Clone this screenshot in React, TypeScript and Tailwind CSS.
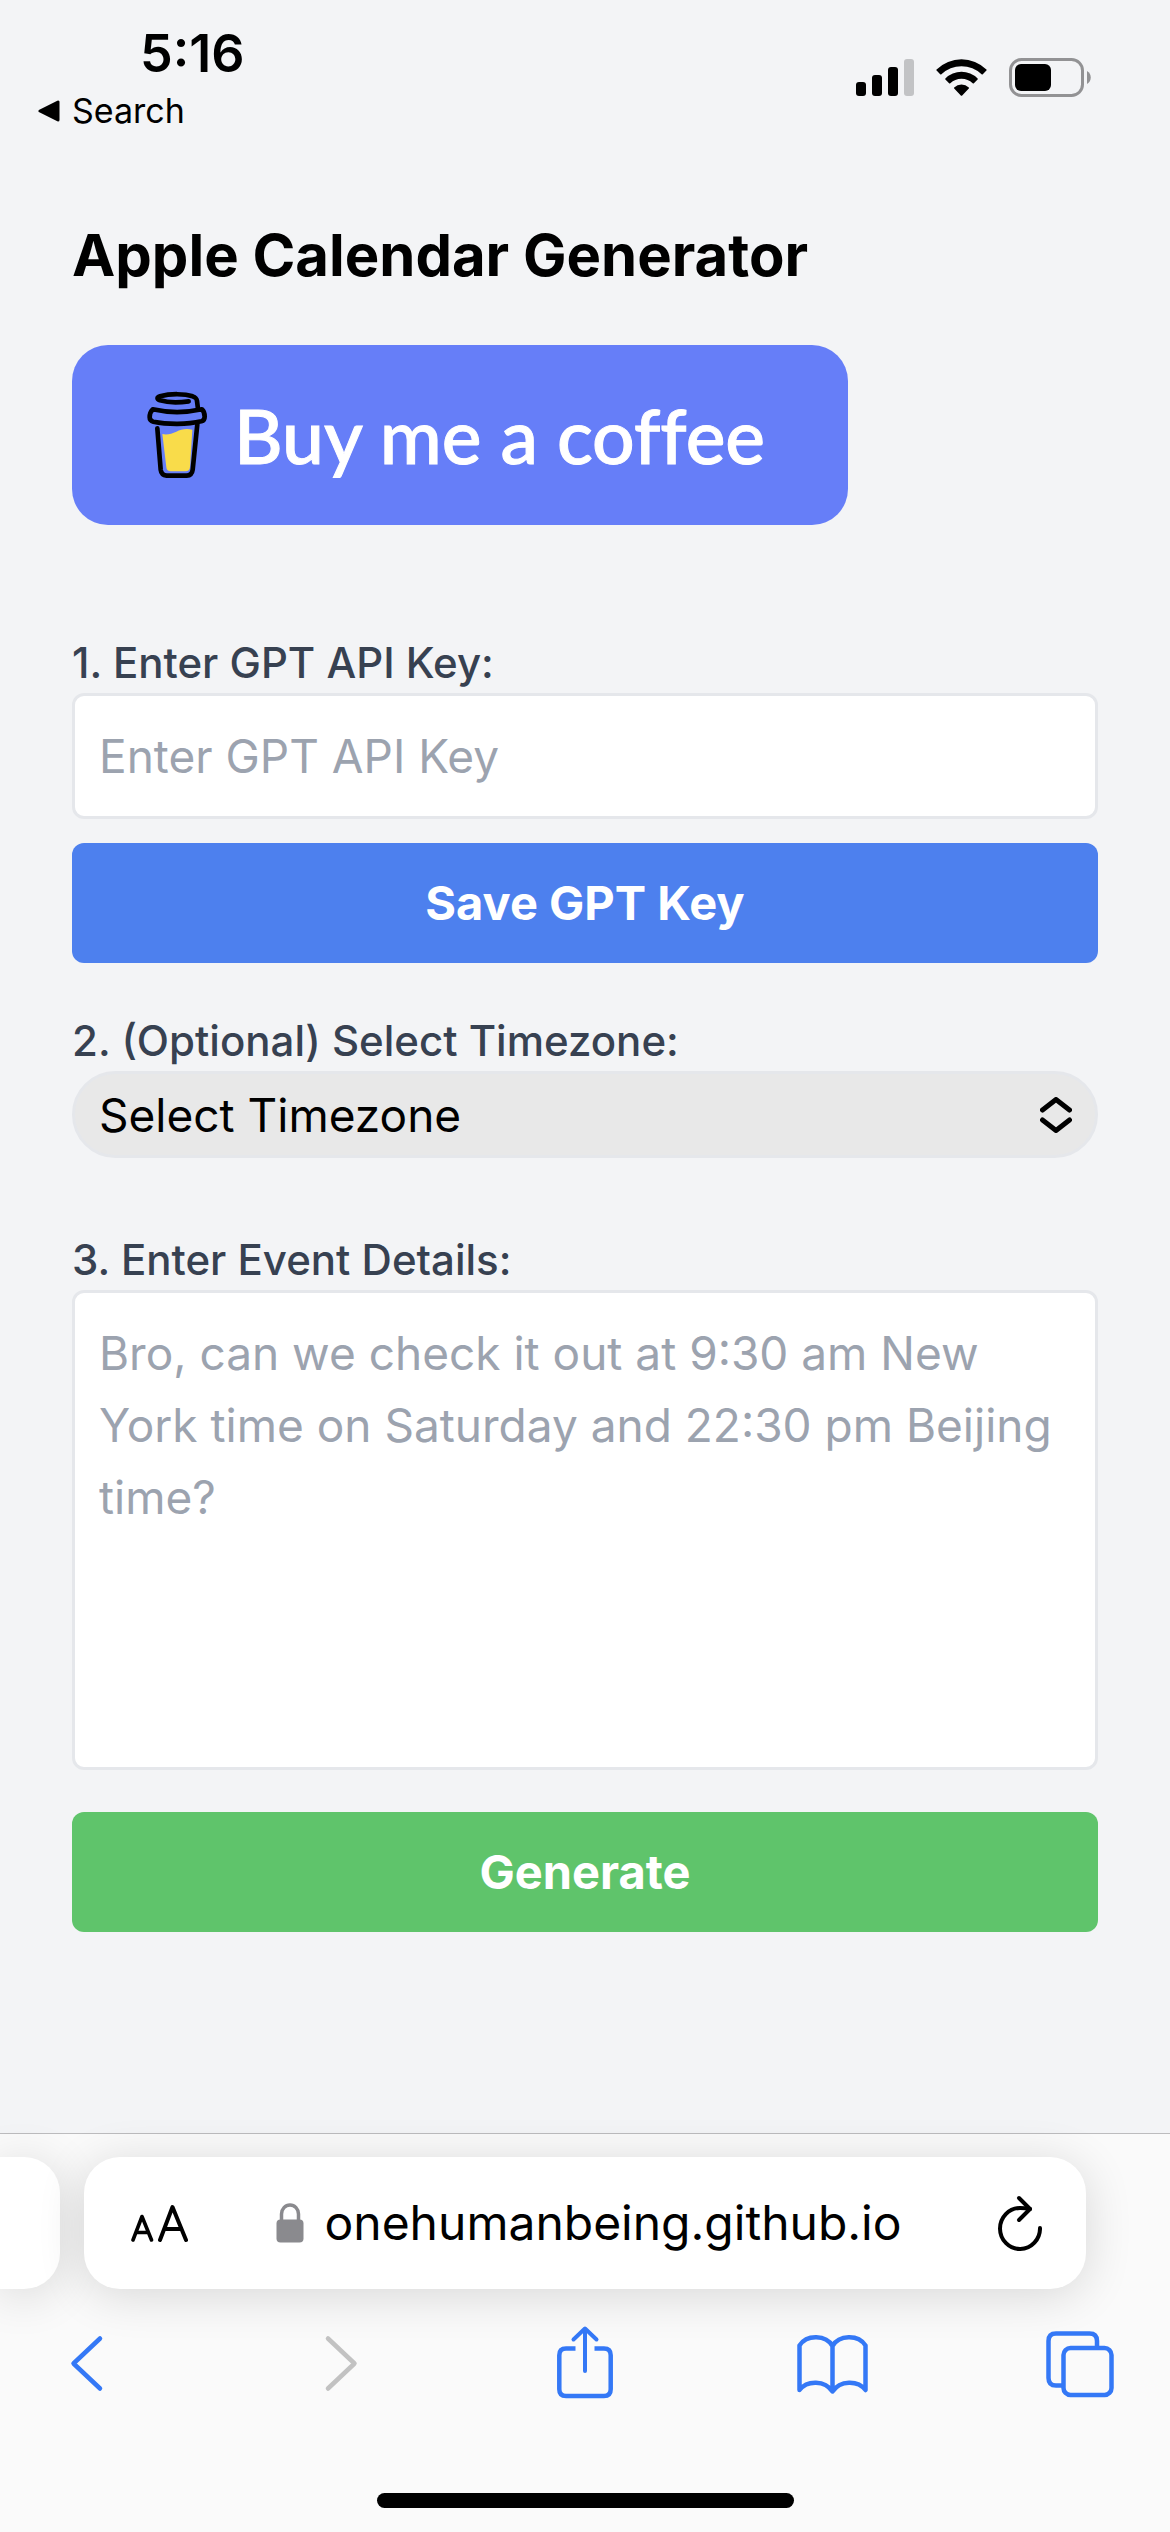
import { useState } from "react";
import type { FormEvent, ReactNode } from "react";

const TIMEZONES = ["America/New_York", "Europe/London", "Asia/Shanghai", "Asia/Tokyo"];

function StatusBar() {
  return (
    <header className="flex items-start justify-between pt-6 pb-3 pr-[79px] text-black">
      <div>
        <div className="pl-[140px] text-[52px] leading-[60px] font-semibold">5:16</div>
        <a href="#search" className="mt-[9px] flex items-center gap-3 pl-[38px] text-[34px] leading-9">
          <svg width="22" height="22" viewBox="0 0 22 22" aria-hidden="true">
            <path d="M20 2v18L2 11z" fill="#000" stroke="#000" strokeWidth="3" strokeLinejoin="round" />
          </svg>
          Search
        </a>
      </div>

      <div className="mt-[34px] flex items-center">
        <svg width="58" height="39" viewBox="0 0 58 39" aria-label="Signal">
          <rect x="0" y="24" width="10" height="14" rx="3" />
          <rect x="16" y="17" width="10" height="21" rx="3" />
          <rect x="32" y="9" width="10" height="29" rx="3" />
          <rect x="48" y="1" width="10" height="37" rx="3" fill="#c2c3c5" />
        </svg>
        <svg width="51" height="39" viewBox="0 0 51 39" className="ml-[22px]" aria-label="Wi-Fi">
          <path d="M0.6 11.4a35.6 35.6 0 0 1 49.8 0q.6.6 0 1.2l-3.6 3.7q-.6.6-1.2 0a28.8 28.8 0 0 0-40.2 0q-.6.6-1.2 0L.6 12.6q-.6-.6 0-1.2z" />
          <path d="M9.4 20.4a23 23 0 0 1 32.2 0q.6.6 0 1.2l-3.7 3.7q-.6.5-1.2 0a16 16 0 0 0-22.4 0q-.6.5-1.2 0l-3.7-3.7q-.6-.6 0-1.2z" />
          <path d="M18.2 29.4a10.7 10.7 0 0 1 14.6 0q.6.6 0 1.2l-6.6 6.8q-.7.7-1.4 0l-6.6-6.8q-.6-.6 0-1.2z" />
        </svg>
        <svg width="82" height="39" viewBox="0 0 82 39" className="ml-[22px]" aria-label="Battery">
          <rect x="1.5" y="1.5" width="72" height="36" rx="11" fill="none" stroke="#929294" strokeWidth="3" />
          <rect x="6" y="6" width="36" height="27" rx="6" />
          <path d="M78 13c5 2.5 5 10.5 0 13z" fill="#929294" />
        </svg>
      </div>
    </header>
  );
}

function CoffeeCup() {
  return (
    <svg width="65" height="90" viewBox="45 30 195 270" fill="none" aria-hidden="true">
      <path d="M97 162c14 4 28-1 42-7 14-7 30-10 48-6l-7 112q-1 13-14 13h-44q-12 0-13-12z" fill="#f9dc4a" />
      <g stroke="#000" strokeWidth="14" strokeLinecap="round" strokeLinejoin="round">
        <path d="M176 64c-28 4-66 3-86-3-10-4-10-9 0-12 32-9 74-8 98 0 11 4 12 8 13 14l3 24" />
        <path d="M68 88c44 10 102 10 148 0 6 5 8 15 8 22 0 8-3 12-10 14-42 10-102 10-144 1-8-2-11-6-11-13 0-8 3-18 9-24z" />
        <path d="M82 145l10 124q2 16 18 18h60q16-1 18-18l14-136" />
      </g>
    </svg>
  );
}

function AddressBar() {
  return (
    <div className="flex gap-6 pr-[84px]">
      <div className="h-[132px] w-[60px] rounded-r-[36px] bg-white shadow-[0_6px_48px_rgba(0,0,0,0.14)]" />
      <div className="flex h-[132px] flex-1 items-center justify-between rounded-[36px] bg-white pr-11 pl-[47px] shadow-[0_6px_48px_rgba(0,0,0,0.14)]">
        <button type="button" aria-label="Page settings" className="w-[57px]">
          <svg width="57" height="38" viewBox="0 0 57 38" fill="none" stroke="#000" strokeLinecap="round" strokeLinejoin="round">
            <path d="M2 36 11 12.5 20.5 36M5.5 28.5h11.5" strokeWidth="3.6" />
            <path d="M29 36 41.5 3 55 36M33.5 25h17" strokeWidth="4" />
          </svg>
        </button>
        <button type="button" className="mr-2 flex items-center gap-5 text-[48px] leading-[60px] text-black">
          <svg width="28" height="40" viewBox="0 0 28 40" aria-hidden="true">
            <path d="M5.5 18v-7a8.5 9 0 0 1 17 0v7" fill="none" stroke="#8a8a8e" strokeWidth="3.5" />
            <rect x="0.5" y="16.5" width="27" height="23" rx="4" fill="#8a8a8e" />
          </svg>
          onehumanbeing.github.io
        </button>
        <button type="button" aria-label="Reload">
          <svg width="44" height="56" viewBox="0 0 44 56" fill="none" stroke="#000" strokeWidth="4" strokeLinecap="round" strokeLinejoin="round">
            <path d="M42 33A20 20.5 0 1 1 22 13q5 0 10 1" />
            <path d="M21 3 32 14 21 25" />
          </svg>
        </button>
      </div>
    </div>
  );
}

function NavButton({ label, disabled, children }: { label: string; disabled?: boolean; children: ReactNode }) {
  return (
    <button type="button" aria-label={label} disabled={disabled} className="text-[#3478f6] disabled:text-[#c2c2c2]">
      <svg
        width="74"
        height="74"
        viewBox="0 0 74 74"
        fill="none"
        stroke="currentColor"
        strokeWidth="4.5"
        strokeLinecap="round"
        strokeLinejoin="round"
        className="overflow-visible"
      >
        {children}
      </svg>
    </button>
  );
}

function BrowserBar() {
  return (
    <footer className="border-t border-[#bcbcbe] bg-[#fafafa] pt-[23px] pb-6">
      <AddressBar />
      <nav className="mt-9 flex justify-between px-12">
        <NavButton label="Back">
          <path d="M52 13.5 25.5 38.5 52 63.5" />
        </NavButton>
        <NavButton label="Forward" disabled>
          <path d="M30 13.5 56.5 38.5 30 63.5" />
        </NavButton>
        <NavButton label="Share">
          <path d="M27.5 23.5H18q-6.7 0-6.7 6.7v34q0 6.7 6.7 6.7h38q6.7 0 6.7-6.7v-34q0-6.7-6.7-6.7h-9.5" strokeLinecap="butt" />
          <path d="M37 46V4M25.5 14.5 37 3.5l11.5 11" strokeWidth="4" />
        </NavButton>
        <NavButton label="Bookmarks">
          <path d="M34.5 21C28 10 9 9 1.5 20.5V65C9 55 27 55 34.5 66.5 42 55 60 55 67.5 65V20.5C60 9 41 10 34.5 21zV66" />
        </NavButton>
        <NavButton label="Tabs">
          <path d="M14 60.5H8q-7.5 0-7.5-7.5V16q0-7.5 7.5-7.5h33.5q7.5 0 7.5 7.5v7" strokeLinecap="butt" />
          <rect x="15.5" y="23" width="48" height="47" rx="7" />
        </NavButton>
      </nav>
      <div className="mx-auto mt-[94px] h-[15px] w-[417px] rounded-full bg-black" />
    </footer>
  );
}

export default function App() {
  const [apiKey, setApiKey] = useState("");
  const [timezone, setTimezone] = useState("");
  const [details, setDetails] = useState("");

  const handleSubmit = (e: FormEvent) => e.preventDefault();

  return (
    <div className="flex min-h-screen flex-col bg-[#f3f4f6] font-['Inter',sans-serif]">
      <StatusBar />

      <main className="flex-1 px-[72px] pt-[72px]">
        <h1 className="text-[58px] leading-[84px] font-bold text-black">Apple Calendar Generator</h1>

        <a
          href="#coffee"
          className="mt-12 flex h-[180px] w-[776px] max-w-full items-center gap-6 rounded-[36px] bg-[#667ef8] pl-[73px] font-['Lato',sans-serif] text-[75px] leading-none font-medium whitespace-nowrap text-white [-webkit-text-stroke:1px_white] [font-variant-ligatures:none]"
        >
          <CoffeeCup />
          Buy me a coffee
        </a>

        <form onSubmit={handleSubmit} className="mt-[108px] text-[46px] leading-[72px]">
          <label htmlFor="api-key" className="block text-[42px] leading-[60px] font-medium text-[#374151]">
            1. Enter GPT API Key:
          </label>
          <input
            id="api-key"
            type="text"
            placeholder="Enter GPT API Key"
            value={apiKey}
            onChange={(e) => setApiKey(e.target.value)}
            className="block h-[126px] w-full rounded-xl border-[3px] border-[#e5e7eb] bg-white px-6 placeholder:text-[#9ca3af]"
          />
          <button type="button" className="mt-6 block w-full rounded-xl bg-[#4d80ee] py-6 text-[47px] font-bold text-white">
            Save GPT Key
          </button>

          <label htmlFor="timezone" className="mt-12 block text-[42px] leading-[60px] font-medium text-[#374151]">
            2. (Optional) Select Timezone:
          </label>
          <div className="relative">
            <select
              id="timezone"
              value={timezone}
              onChange={(e) => setTimezone(e.target.value)}
              className="block h-[87px] w-full appearance-none rounded-full border-[3px] border-[#e5e7eb] bg-[#e8e8e8] px-6 text-black"
            >
              <option value="">Select Timezone</option>
              {TIMEZONES.map((tz) => (
                <option key={tz} value={tz}>
                  {tz}
                </option>
              ))}
            </select>
            <svg
              width="32"
              height="36"
              viewBox="0 0 32 36"
              fill="none"
              stroke="#000"
              strokeWidth="5"
              strokeLinecap="round"
              strokeLinejoin="round"
              className="pointer-events-none absolute inset-y-0 right-[26px] my-auto"
              aria-hidden="true"
            >
              <path d="M2.5 13 16 2.5 29.5 13M2.5 23 16 33.5 29.5 23" />
            </svg>
          </div>

          <label htmlFor="details" className="mt-[72px] block text-[42px] leading-[60px] font-medium text-[#374151]">
            3. Enter Event Details:
          </label>
          <textarea
            id="details"
            placeholder="Bro, can we check it out at 9:30 am New York time on Saturday and 22:30 pm Beijing time?"
            value={details}
            onChange={(e) => setDetails(e.target.value)}
            className="block h-[480px] w-full resize-none rounded-xl border-[3px] border-[#e5e7eb] bg-white p-6 placeholder:text-[#9ca3af]"
          />
          <button type="submit" className="mt-[42px] block w-full rounded-xl bg-[#5fc46b] py-6 text-[47px] font-bold text-white">
            Generate
          </button>
        </form>
      </main>

      <BrowserBar />
    </div>
  );
}
